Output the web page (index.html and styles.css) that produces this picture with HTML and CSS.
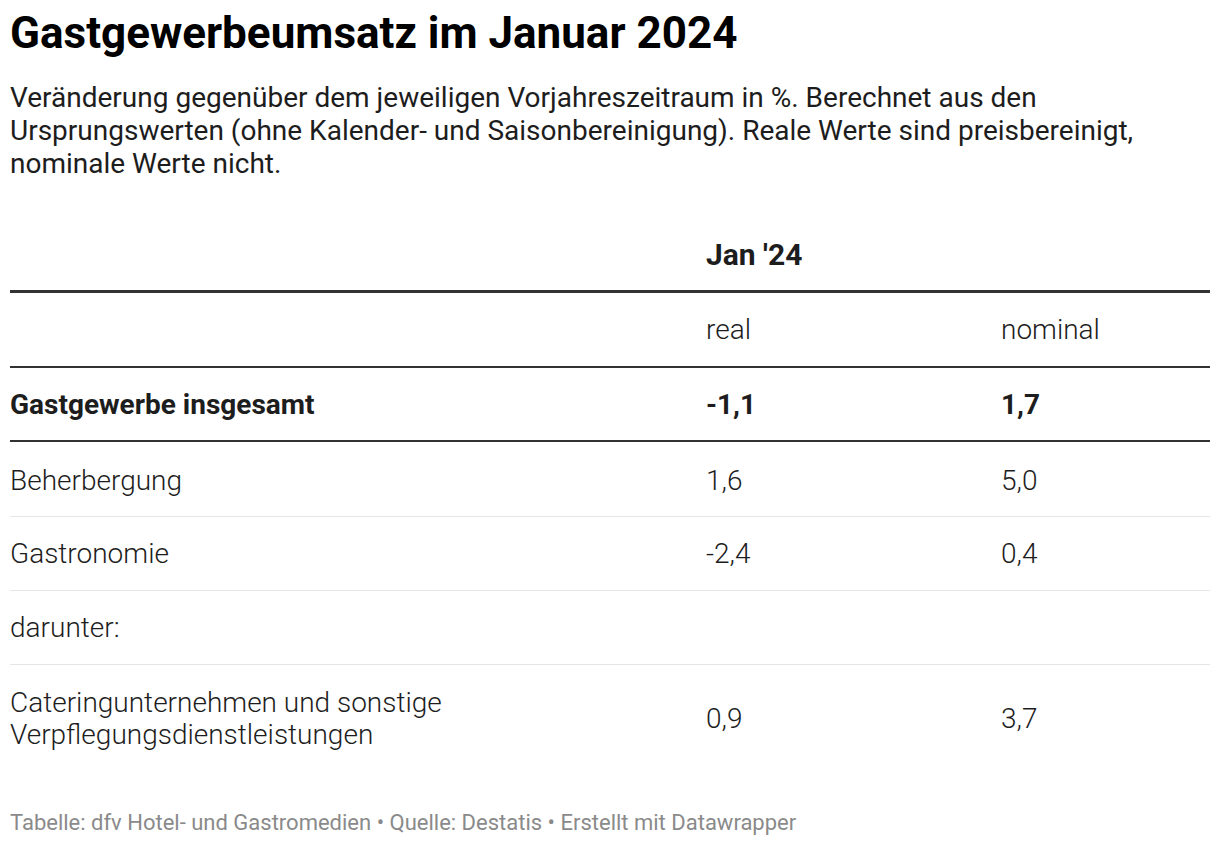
FILE: index.html
```html
<!DOCTYPE html>
<html lang="de">
<head>
<meta charset="utf-8">
<title>Gastgewerbeumsatz im Januar 2024</title>
<link rel="stylesheet" href="styles.css">
</head>
<body>
<div class="chart">
  <h1 class="title">Gastgewerbeumsatz im Januar 2024</h1>
  <p class="desc">Veränderung gegenüber dem jeweiligen Vorjahreszeitraum in %. Berechnet aus den Ursprungswerten (ohne Kalender- und Saisonbereinigung). Reale Werte sind preisbereinigt, nominale Werte nicht.</p>
  <table class="data">
    <colgroup>
      <col class="c1"><col class="c2"><col class="c3">
    </colgroup>
    <thead>
      <tr class="head-top">
        <th></th>
        <th colspan="2">Jan '24</th>
      </tr>
      <tr class="head-sub">
        <th></th>
        <th>real</th>
        <th>nominal</th>
      </tr>
    </thead>
    <tbody>
      <tr class="total">
        <td>Gastgewerbe insgesamt</td>
        <td>-1,1</td>
        <td>1,7</td>
      </tr>
      <tr class="row first">
        <td>Beherbergung</td>
        <td>1,6</td>
        <td>5,0</td>
      </tr>
      <tr class="row">
        <td>Gastronomie</td>
        <td>-2,4</td>
        <td>0,4</td>
      </tr>
      <tr class="row">
        <td>darunter:</td>
        <td></td>
        <td></td>
      </tr>
      <tr class="last">
        <td>Cateringunternehmen und sonstige<br>Verpflegungsdienstleistungen</td>
        <td>0,9</td>
        <td>3,7</td>
      </tr>
    </tbody>
  </table>
  <p class="footer">Tabelle: dfv Hotel- und Gastromedien • Quelle: Destatis • Erstellt mit Datawrapper</p>
</div>
</body>
</html>
```

FILE: styles.css
```css
html, body {
  margin: 0;
  padding: 0;
  background: #fff;
}
.chart {
  padding: 9px 10px 0 10px;
  font-family: Roboto, "Liberation Sans", sans-serif;
  color: #1d1d1d;
}
.title {
  margin: 0;
  font-size: 44px;
  line-height: 48px;
  font-weight: 700;
  color: #000;
}
.desc {
  margin: 24px 0 0 0;
  font-size: 28px;
  line-height: 33px;
  color: #1d1d1d;
}
.data {
  width: 1200px;
  border-collapse: separate;
  border-spacing: 0;
  margin-top: 58px;
  font-size: 28px;
  font-weight: 300;
  table-layout: fixed;
}
.c1 { width: 696px; }
.c2 { width: 295px; }
.c3 { width: 209px; }
.data th, .data td {
  padding: 0;
  text-align: left;
  vertical-align: middle;
}
.head-top th {
  font-size: 30px;
  line-height: 34px;
  padding-bottom: 18px;
  font-weight: 700;
  border-bottom: 3px solid #333;
}
.head-sub th {
  height: 73px;
  font-weight: 300;
  border-bottom: 2px solid #333;
}
.total td {
  height: 72px;
  font-weight: 700;
  border-bottom: 2px solid #333;
}
.row td {
  height: 73px;
  border-bottom: 1px solid #e6e6e6;
}
.row.first td {
  height: 72px;
  padding-top: 2px;
}
.last td {
  padding: 22px 0;
  line-height: 32px;
}
.footer {
  margin: 37px 0 0 0;
  font-size: 22px;
  line-height: 26px;
  color: #8a8a8a;
}
```
